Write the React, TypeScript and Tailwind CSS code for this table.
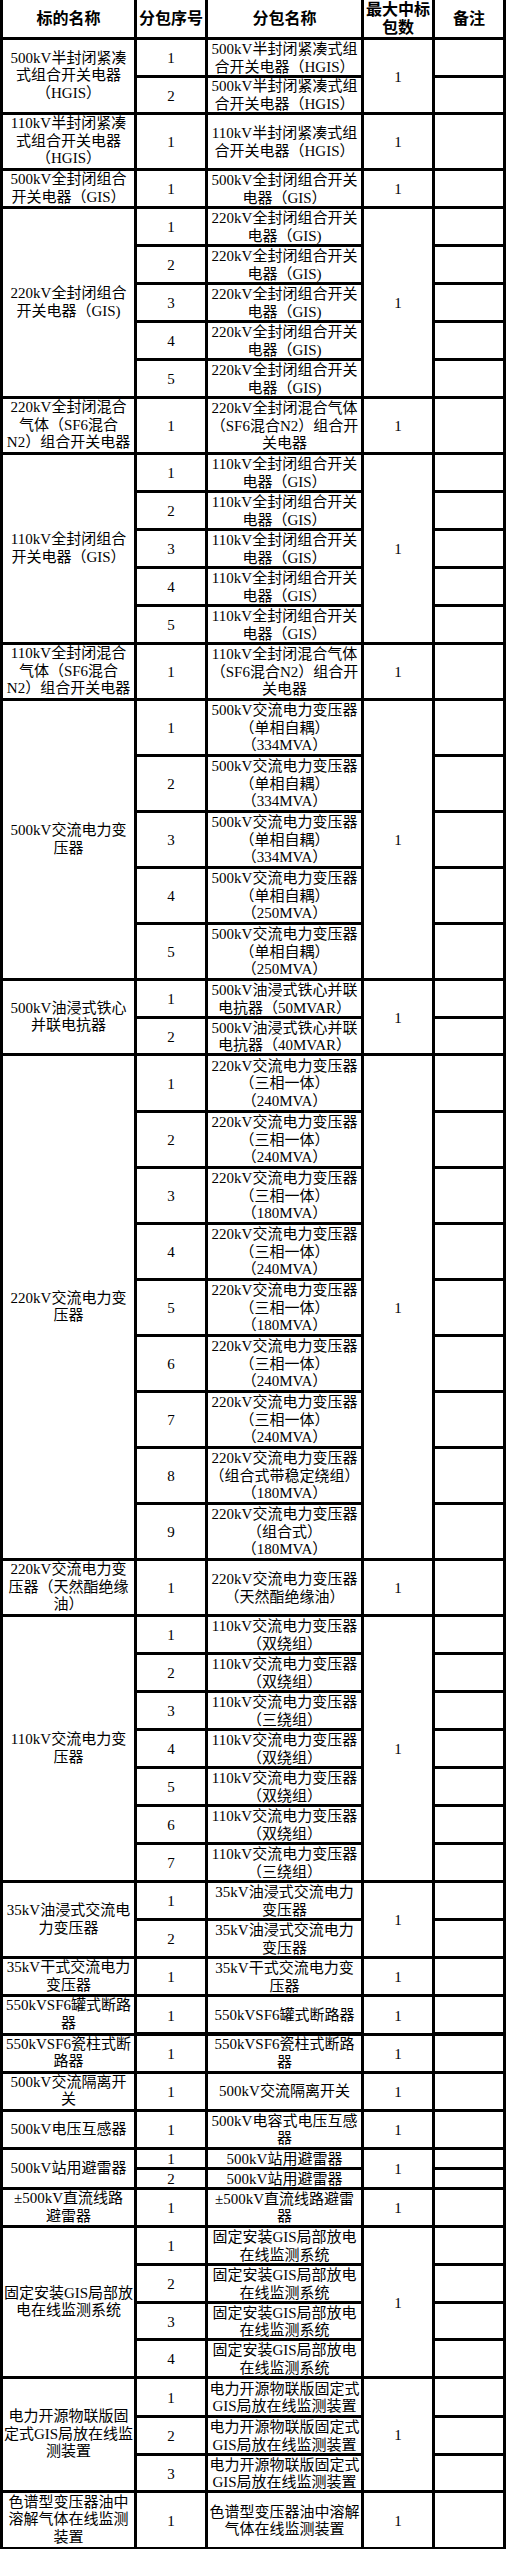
type Sub = { no: number; name: string; h: string };
type Group = { name: string; subs: Sub[] };

// row heights (cell content, borders are the 3px gaps)
const H1 = "h-[17px]";
const H2 = "h-[35px]";
const H2s = "h-[34px]";
const H2l = "h-[36px]";
const H3 = "h-[53px]";
const H3l = "h-[54px]";

const same = (name: string, hs: string[]): Sub[] => hs.map((h, i) => ({ no: i + 1, name, h }));

const t220 = (mid: string, mva: string) => `220kV交流电力变压器\n（${mid}）\n（${mva}）`;
const t110 = (kind: string) => `110kV交流电力变压器\n（${kind}）`;

const groups: Group[] = [
  {
    name: "500kV半封闭紧凑\n式组合开关电器\n（HGIS）",
    subs: same("500kV半封闭紧凑式组\n合开关电器（HGIS）", [H2, H2s]),
  },
  {
    name: "110kV半封闭紧凑\n式组合开关电器\n（HGIS）",
    subs: same("110kV半封闭紧凑式组\n合开关电器（HGIS）", [H3]),
  },
  {
    name: "500kV全封闭组合\n开关电器（GIS）",
    subs: same("500kV全封闭组合开关\n电器（GIS）", [H2]),
  },
  {
    name: "220kV全封闭组合\n开关电器（GIS)",
    subs: same("220kV全封闭组合开关\n电器（GIS)", [H2, H2, H2, H2, H2]),
  },
  {
    name: "220kV全封闭混合\n气体（SF6混合\nN2）组合开关电器",
    subs: same("220kV全封闭混合气体\n（SF6混合N2）组合开\n关电器", [H3]),
  },
  {
    name: "110kV全封闭组合\n开关电器（GIS）",
    subs: same("110kV全封闭组合开关\n电器（GIS）", [H2, H2, H2, H2, H2]),
  },
  {
    name: "110kV全封闭混合\n气体（SF6混合\nN2）组合开关电器",
    subs: same("110kV全封闭混合气体\n（SF6混合N2）组合开\n关电器", [H3]),
  },
  {
    name: "500kV交流电力变\n压器",
    subs: ["334MVA", "334MVA", "334MVA", "250MVA", "250MVA"].map((m, i) => ({
      no: i + 1,
      name: `500kV交流电力变压器\n（单相自耦）\n（${m}）`,
      h: H3,
    })),
  },
  {
    name: "500kV油浸式铁心\n并联电抗器",
    subs: [
      { no: 1, name: "500kV油浸式铁心并联\n电抗器（50MVAR）", h: H2 },
      { no: 2, name: "500kV油浸式铁心并联\n电抗器（40MVAR）", h: H2s },
    ],
  },
  {
    name: "220kV交流电力变\n压器",
    subs: [
      { no: 1, name: t220("三相一体", "240MVA"), h: H3l },
      { no: 2, name: t220("三相一体", "240MVA"), h: H3 },
      { no: 3, name: t220("三相一体", "180MVA"), h: H3 },
      { no: 4, name: t220("三相一体", "240MVA"), h: H3 },
      { no: 5, name: t220("三相一体", "180MVA"), h: H3 },
      { no: 6, name: t220("三相一体", "240MVA"), h: H3 },
      { no: 7, name: t220("三相一体", "240MVA"), h: H3 },
      { no: 8, name: t220("组合式带稳定绕组", "180MVA"), h: H3 },
      { no: 9, name: t220("组合式", "180MVA"), h: H3 },
    ],
  },
  {
    name: "220kV交流电力变\n压器（天然酯绝缘\n油）",
    subs: same("220kV交流电力变压器\n（天然酯绝缘油）", [H3]),
  },
  {
    name: "110kV交流电力变\n压器",
    subs: ["双绕组", "双绕组", "三绕组", "双绕组", "双绕组", "双绕组", "三绕组"].map((k, i) => ({
      no: i + 1,
      name: t110(k),
      h: H2,
    })),
  },
  {
    name: "35kV油浸式交流电\n力变压器",
    subs: same("35kV油浸式交流电力\n变压器", [H2, H2]),
  },
  { name: "35kV干式交流电力\n变压器", subs: same("35kV干式交流电力变\n压器", [H2]) },
  { name: "550kVSF6罐式断路\n器", subs: same("550kVSF6罐式断路器", [H2]) },
  { name: "550kVSF6瓷柱式断\n路器", subs: same("550kVSF6瓷柱式断路\n器", [H2]) },
  { name: "500kV交流隔离开\n关", subs: same("500kV交流隔离开关", [H2]) },
  { name: "500kV电压互感器", subs: same("500kV电容式电压互感\n器", [H2]) },
  { name: "500kV站用避雷器", subs: same("500kV站用避雷器", [H1, H1]) },
  { name: "±500kV直流线路\n避雷器", subs: same("±500kV直流线路避雷\n器", [H2]) },
  {
    name: "固定安装GIS局部放\n电在线监测系统",
    subs: same("固定安装GIS局部放电\n在线监测系统", [H2, H2, H2s, H2]),
  },
  {
    name: "电力开源物联版固\n定式GIS局放在线监\n测装置",
    subs: same("电力开源物联版固定式\nGIS局放在线监测装置", [H2l, H2, H2s]),
  },
  {
    name: "色谱型变压器油中\n溶解气体在线监测\n装置",
    subs: same("色谱型变压器油中溶解\n气体在线监测装置", [H3l]),
  },
];

const cell = "flex items-center justify-center bg-white text-center";

const Lines = ({ text }: { text: string }) => (
  <div>
    {text.split("\n").map((line, i) => (
      <span key={i} className="block whitespace-nowrap">
        {line}
      </span>
    ))}
  </div>
);

const GroupRow = ({ group }: { group: Group }) => (
  <div className="flex gap-[3px]">
    <div className={`${cell} w-[131px]`}>
      <Lines text={group.name} />
    </div>
    <div className="flex w-[68px] flex-col gap-[3px]">
      {group.subs.map((s) => (
        <div key={s.no} className={`${cell} ${s.h} pt-[3px]`}>
          {s.no}
        </div>
      ))}
    </div>
    <div className="flex w-[153px] flex-col gap-[3px]">
      {group.subs.map((s) => (
        <div key={s.no} className={`${cell} ${s.h} pt-[2px]`}>
          <Lines text={s.name} />
        </div>
      ))}
    </div>
    <div className={`${cell} w-[68px] pt-[3px]`}>1</div>
    <div className="flex w-[68px] flex-col gap-[3px]">
      {group.subs.map((s) => (
        <div key={s.no} className={`bg-white ${s.h}`} />
      ))}
    </div>
  </div>
);

export default function App() {
  return (
    <div className="flex h-[2549px] w-[506px] flex-col gap-[3px] overflow-hidden bg-black px-[3px] pb-[3px] font-['Liberation_Serif','Noto_Sans_CJK_SC',serif] text-[15px] leading-[17.6px] text-black">
      <div className="flex h-[37px] shrink-0 gap-[3px] text-[16px] font-bold leading-[18px]">
        <div className={`${cell} w-[131px]`}>标的名称</div>
        <div className={`${cell} w-[68px] whitespace-nowrap`}>分包序号</div>
        <div className={`${cell} w-[153px]`}>分包名称</div>
        <div className={`${cell} w-[68px]`}>
          <Lines text={"最大中标\n包数"} />
        </div>
        <div className={`${cell} w-[68px]`}>备注</div>
      </div>
      {groups.map((g, i) => (
        <GroupRow key={i} group={g} />
      ))}
    </div>
  );
}
